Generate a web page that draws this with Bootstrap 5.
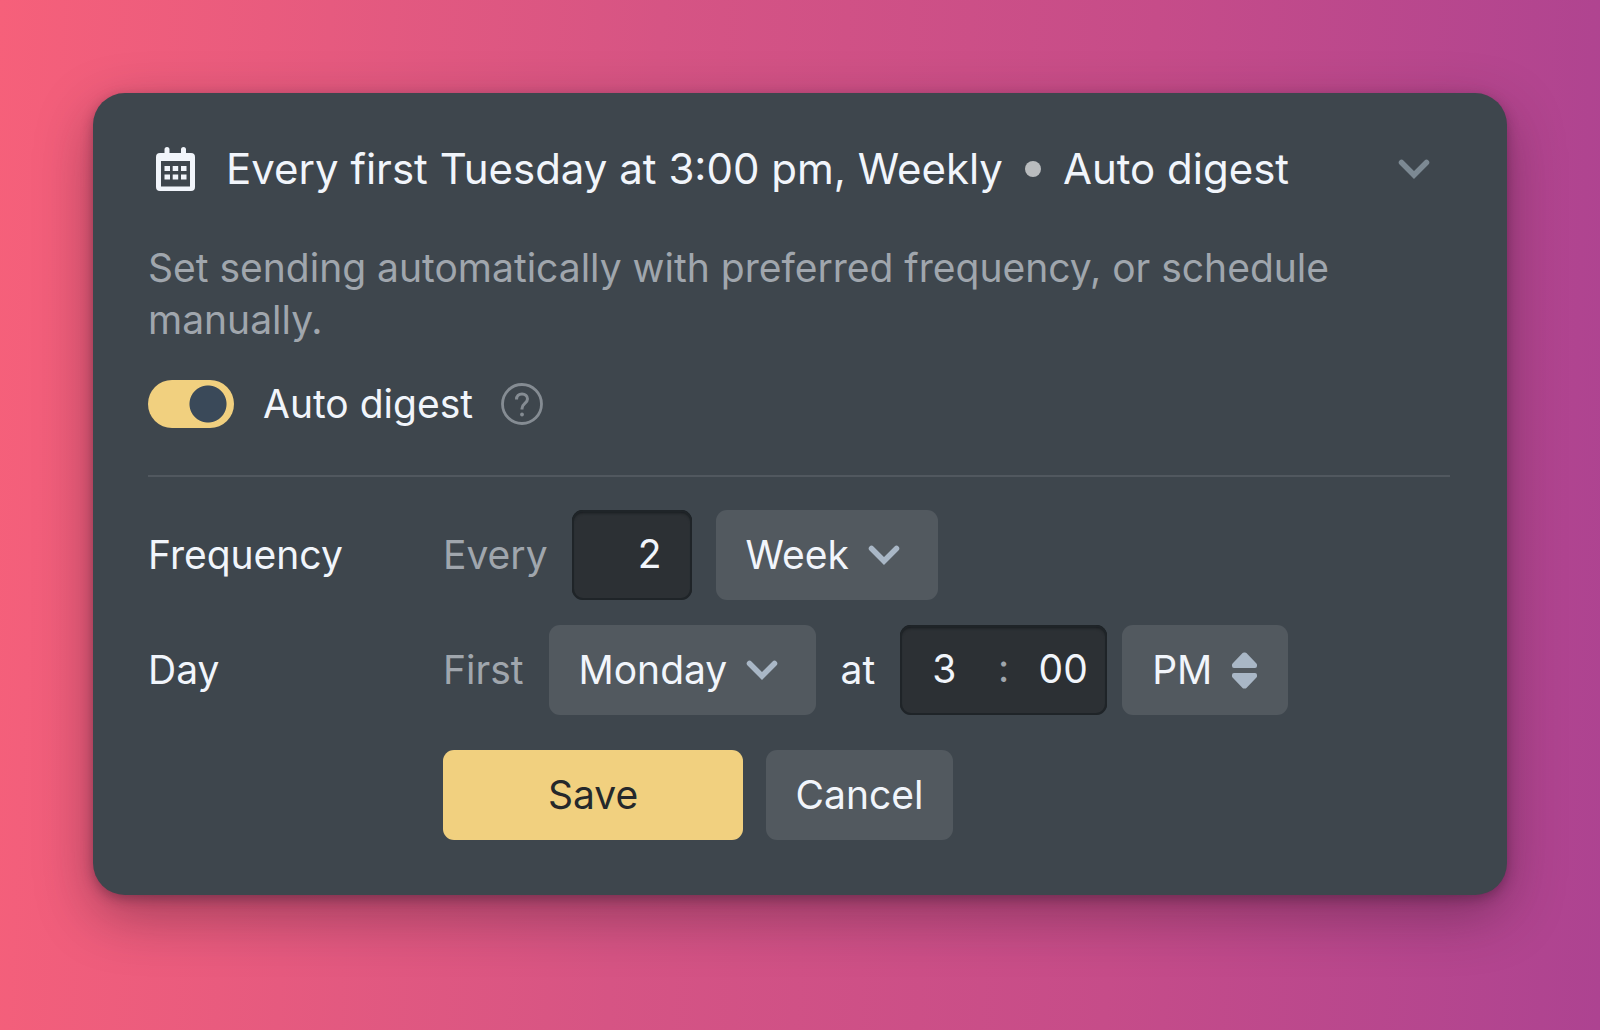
<!DOCTYPE html>
<html lang="en">
<head>
<meta charset="utf-8">
<meta name="viewport" content="width=device-width, initial-scale=1">
<title>Digest schedule</title>
<link href="https://cdn.jsdelivr.net/npm/bootstrap@5.3.0/dist/css/bootstrap.min.css" rel="stylesheet">
<style>
  body {
    font-family: Inter, "Liberation Sans", sans-serif;
    font-size: 39px;
    line-height: 52px;
    color: #f1f5fb;
    background: linear-gradient(93deg, #f6607a 0%, #d65484 40%, #c64c89 70%, #ad4391 100%);
  }
  .schedule-card {
    background: #3e464d;
    border-radius: 32px;
    padding: 50px 57px 55px 55px;
    box-shadow: 0 4px 12px rgba(50, 20, 40, .35), 0 20px 56px rgba(50, 20, 40, .4);
  }
  .page-pad { padding: 93px; }
  .summary { font-size: 42px; line-height: 52px; color: #f1f5fb; }
  .summary .cal { margin: 0 31px 0 8px; }
  .summary .chev { margin-right: 20px; }
  .sep-dot { width: 16px; height: 16px; margin: 0 22px; background: #b9bcbe; }
  .dim { color: #a0a6ad; }
  .intro { margin-top: 47px; }
  .switch-row { margin-top: 32px; gap: 28px; }
  .switch-pair { gap: 29px; }
  .form-check-input.digest-switch {
    width: 86px; height: 48px;
    background-color: #f1d07f;
    border: 0;
    background-image: radial-gradient(circle closest-side, #3a4959 95%, transparent 100%) !important;
    background-size: 38px 38px;
    background-position: 6px center;
  }
  .form-switch .form-check-input.digest-switch:checked { background-position: 41px center; }
  .rule { height: 2px; margin: 45px 0 33px; background: #51585f; opacity: 1; border: 0; }
  .line-label { width: 295px; }
  .ctl {
    height: 90px;
    border: 0;
    border-radius: 11px;
    font-size: 39px;
    line-height: 52px;
    color: #f1f5fb;
    background-color: #52595f;
  }
  .ctl-select {
    appearance: none;
    padding: 0 0 0 30px;
    background-repeat: no-repeat;
    background-position: right 38px center;
    background-image: url("data:image/svg+xml,%3Csvg xmlns='http://www.w3.org/2000/svg' width='32' height='20' viewBox='0 0 32 20'%3E%3Cpath d='M3.500 3.500L16 16L28.500 3.500' fill='none' stroke='%23a9b7c6' stroke-width='5.500' stroke-linecap='round'/%3E%3C/svg%3E");
  }
  .ctl-updown {
    background-position: right 31px center;
    background-image: url("data:image/svg+xml,%3Csvg xmlns='http://www.w3.org/2000/svg' width='25' height='37' viewBox='0 0 25 37'%3E%3Cg fill='%23a9b7c6' stroke='%23a9b7c6' stroke-width='4' stroke-linejoin='round'%3E%3Cpath d='M12 2.500h1L23 12.800V14H2v-1.200z'/%3E%3Cpath d='M12 34.500h1L23 24.200V23H2v1.200z'/%3E%3C/g%3E%3C/svg%3E");
  }
  .ctl-dark {
    background: #2c3034;
    box-shadow: inset 0 0 0 2px #1f2428, inset 0 3px 3px #181c1f;
  }
  .count-box { width: 120px; padding: 0 30px 4px; text-align: right; }
  .time-box { width: 207px; padding-bottom: 4px; }
  .time-box input {
    width: 88px; height: 86px;
    border: 0; background: none; color: inherit; text-align: center;
  }
  .w-unit { width: 222px; }
  .w-day { width: 267px; }
  .w-half { width: 166px; }
  .g-wide { gap: 25px; }
  .g-form { gap: 23px 24px; }
  .g-tight { gap: 15px; }
  .save-btn { width: 300px; color: #25282b; background-color: #f1d07f; }
  .cancel-btn { width: 187px; }
  .form-lines { gap: 25px; }
  .actions { gap: 23px; margin: 10px 0 0 295px; }
</style>
</head>
<body>
<main class="page-pad min-vh-100">
  <section class="schedule-card">
    <button type="button" class="summary btn p-0 border-0 w-100 d-flex align-items-center text-start" aria-expanded="true">
      <svg class="cal flex-shrink-0" width="39" height="44" viewBox="0 0 39 44" aria-hidden="true">
        <path fill="#f1f5fb" fill-rule="evenodd" d="M8.500 2.500a2.500 2.500 0 0 1 5 0V6h11.500V2.500a2.500 2.500 0 0 1 5 0V6H35a4 4 0 0 1 4 4v30a4 4 0 0 1-4 4H4a4 4 0 0 1-4-4V10a4 4 0 0 1 4-4h4.500zM5 14v25.500h29V14z"/>
        <path fill="#f1f5fb" d="M8.500 19h5.500v5H8.500zM16.700 19h5.500v5h-5.500zM25 19h5.500v5H25zM8.500 27.500h5.500v5H8.500zM16.700 27.500h5.500v5h-5.500zM25 27.500h5.500v5H25z"/>
      </svg>
      <span>Every first Tuesday at 3:00 pm, Weekly</span>
      <span class="sep-dot rounded-circle flex-shrink-0"></span>
      <span>Auto digest</span>
      <svg class="chev ms-auto flex-shrink-0" width="32" height="20" viewBox="0 0 32 20" aria-hidden="true">
        <path d="M3.500 3.500L16 16L28.500 3.500" fill="none" stroke="#7c8993" stroke-width="5.500" stroke-linecap="round"/>
      </svg>
    </button>

    <p class="intro dim mb-0">Set sending automatically with preferred frequency, or schedule manually.</p>

    <div class="switch-row d-flex align-items-center">
      <div class="switch-pair form-check form-switch d-flex align-items-center p-0 m-0">
        <input class="form-check-input digest-switch m-0" type="checkbox" role="switch" id="autoDigest" checked>
        <label for="autoDigest">Auto digest</label>
      </div>
      <button type="button" class="btn p-0 border-0 d-flex" aria-label="About auto digest">
        <svg width="42" height="42" viewBox="0 0 42 42" fill="none" stroke="#858c93" aria-hidden="true">
          <circle cx="21" cy="21" r="19.500" stroke-width="2.800"/>
          <path d="M15.500 16.500c0-3.500 2.300-5.500 5.500-5.500s5.500 2 5.500 5c0 4.500-5.500 4.500-5.500 9.500v1" stroke-width="3"/>
          <circle cx="21" cy="31.500" r="1.900" fill="#858c93" stroke="none"/>
        </svg>
      </button>
    </div>

    <hr class="rule">

    <form class="form-lines d-flex flex-column">
      <div class="d-flex align-items-center">
        <label class="line-label" for="count">Frequency</label>
        <div class="d-flex align-items-center g-form">
          <span class="dim">Every</span>
          <input class="ctl ctl-dark count-box" id="count" type="text" inputmode="numeric" value="2">
          <select class="ctl ctl-select w-unit" aria-label="Unit"><option>Day</option><option selected>Week</option><option>Month</option></select>
        </div>
      </div>
      <div class="d-flex align-items-center">
        <label class="line-label" for="day">Day</label>
        <div class="d-flex align-items-center g-wide">
          <span class="dim">First</span>
          <select class="ctl ctl-select w-day" id="day"><option>Monday</option><option>Tuesday</option><option>Wednesday</option></select>
          <span>at</span>
          <div class="d-flex align-items-center g-tight">
            <div class="ctl ctl-dark time-box d-flex align-items-center justify-content-between">
              <input type="text" inputmode="numeric" value="3" aria-label="Hour">
              <span class="dim">:</span>
              <input type="text" inputmode="numeric" value="00" aria-label="Minute">
            </div>
            <select class="ctl ctl-select ctl-updown w-half" aria-label="Half of the day"><option>AM</option><option selected>PM</option></select>
          </div>
        </div>
      </div>
      <div class="actions d-flex">
        <button type="submit" class="btn ctl save-btn">Save</button>
        <button type="button" class="btn ctl cancel-btn">Cancel</button>
      </div>
    </form>
  </section>
</main>
<script src="https://cdn.jsdelivr.net/npm/bootstrap@5.3.0/dist/js/bootstrap.bundle.min.js"></script>
</body>
</html>
